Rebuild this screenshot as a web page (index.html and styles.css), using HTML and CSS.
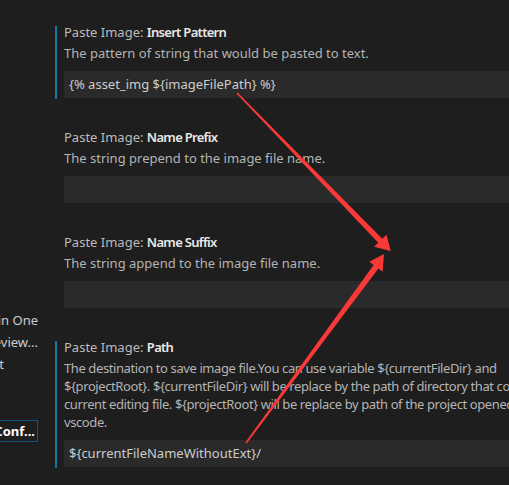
FILE: index.html
```html
<!DOCTYPE html>
<html>
<head>
<meta charset="utf-8">
<link rel="stylesheet" href="styles.css">
</head>
<body>
<div class="page">
  <aside class="sidebar">
    <div class="side-line"><span>Markdown All in One</span></div>
    <div class="side-line"><span>Markdown Preview...</span></div>
    <div class="side-line short"><span>Paste Image: t</span></div>
    <div class="side-btn-row"><span class="side-btn">Open Conf...</span></div>
  </aside>
  <main class="settings">
    <section class="setting focused">
      <div class="title">Paste Image: <b>Insert Pattern</b></div>
      <div class="desc">The pattern of string that would be pasted to text.</div>
      <div class="input">{% asset_img ${imageFilePath} %}</div>
    </section>
    <section class="setting">
      <div class="title">Paste Image: <b>Name Prefix</b></div>
      <div class="desc">The string prepend to the image file name.</div>
      <div class="input"></div>
    </section>
    <section class="setting">
      <div class="title">Paste Image: <b>Name Suffix</b></div>
      <div class="desc">The string append to the image file name.</div>
      <div class="input"></div>
    </section>
    <section class="setting focused">
      <div class="title">Paste Image: <b>Path</b></div>
      <div class="desc nowrap">The destination to save image file.You can use variable ${currentFileDir} and<br>${projectRoot}. ${currentFileDir} will be replace by the path of directory that contain<br>current editing file. ${projectRoot} will be replace by path of the project opened in<br>vscode.</div>
      <div class="input">${currentFileNameWithoutExt}/</div>
    </section>
  </main>
</div>
<svg class="arrows" width="509" height="485" viewBox="0 0 509 485">
  <polygon fill="#f93838" points="236.4,93.6 378.3,242.75 374.1,246.8 390.7,251 386.5,234.8 382.3,238.85 237.6,92.4"/>
  <polygon fill="#f93838" points="246.72,443.53 378.4,268.5 382.7,271.7 384,254 369.3,261.7 373.6,264.9 245.28,442.47"/>
</svg>
</body>
</html>
```
FILE: styles.css
```css
html, body {
  margin: 0;
  padding: 0;
  background: #1e1e1e;
  overflow: hidden;
  width: 509px;
  height: 485px;
}
body {
  font-family: "Noto Sans", "Open Sans", sans-serif;
  font-size: 13px;
  color: #bbbbbb;
}
.page {
  display: flex;
  width: 620px;
}
.sidebar {
  width: 55px;
  flex: none;
  padding-top: 309px;
}
.side-line, .side-btn-row {
  width: 38px;
  display: flex;
  justify-content: flex-end;
  overflow: hidden;
  white-space: nowrap;
}
.side-line {
  line-height: 22px;
  height: 22px;
  color: #cccccc;
}
.side-line.short {
  width: 4px;
}
.side-btn-row {
  margin-top: 45px;
}
.side-btn {
  display: block;
  border: 1px solid #11557f;
  color: #ffffff;
  font-weight: 700;
  line-height: 20px;
  padding: 0 2px 0 4px;
}
.settings {
  width: 560px;
  flex: none;
  padding-top: 26px;
  display: flex;
  flex-direction: column;
  gap: 32px;
}
.setting {
  border-left: 2px solid transparent;
  padding-left: 7px;
  padding-bottom: 1px;
}
.setting.focused {
  border-left-color: #0e7ba3;
}
.title {
  line-height: 12px;
  margin-bottom: 6px;
  color: #bbbbbb;
  white-space: nowrap;
}
.title b {
  color: #e8e8e8;
  font-weight: 600;
  letter-spacing: -0.7px;
}
.desc {
  line-height: 18px;
  color: #b4b4b4;
}
.desc.nowrap {
  white-space: nowrap;
  letter-spacing: -0.4px;
}
.input {
  margin-top: 9px;
  height: 27px;
  line-height: 27px;
  background: #2a2a2a;
  color: #cccccc;
  padding-left: 5px;
  white-space: nowrap;
}
.arrows {
  position: absolute;
  left: 0;
  top: 0;
}
```
